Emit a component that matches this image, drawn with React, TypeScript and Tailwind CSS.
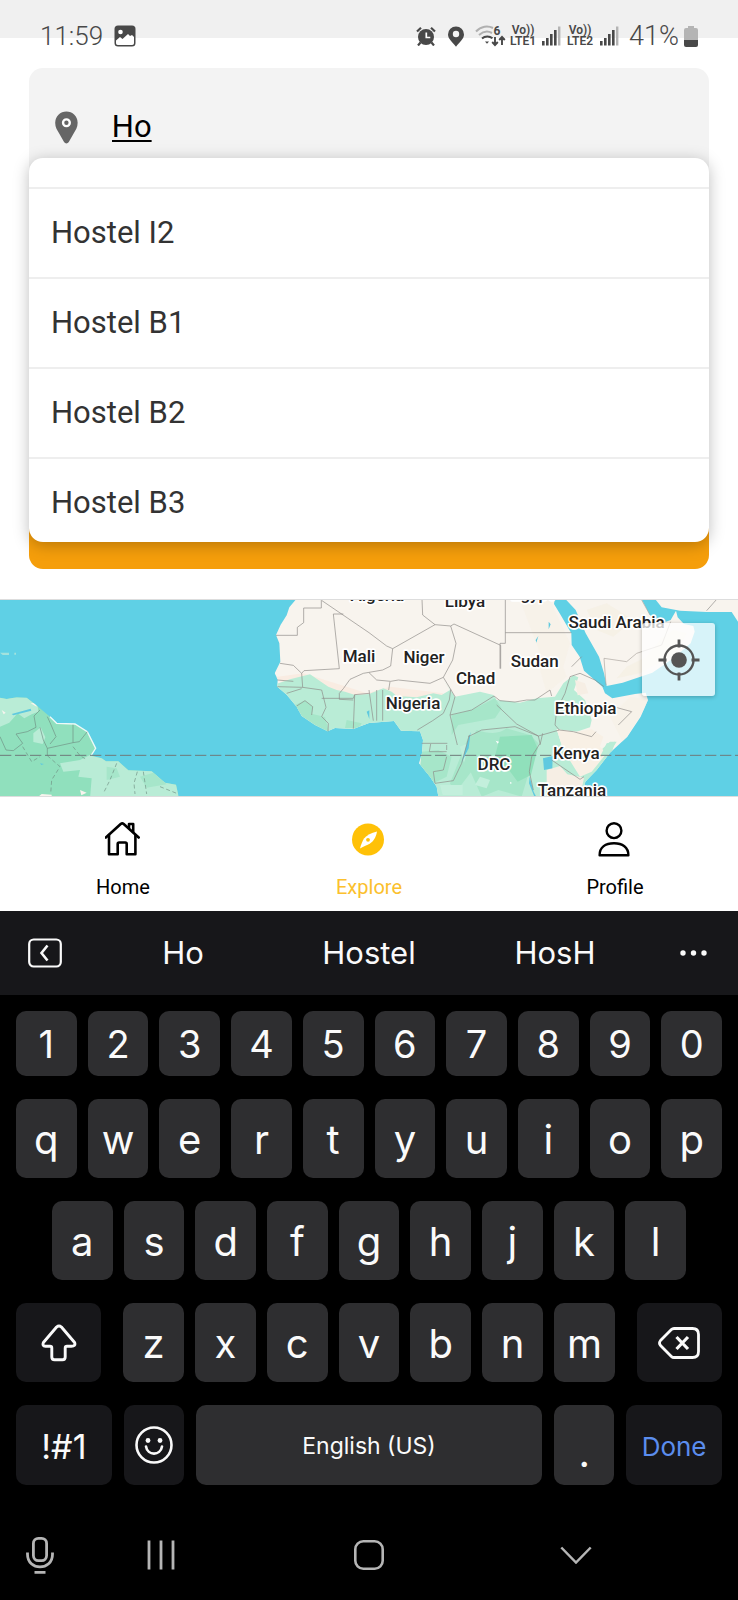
import { useState, type ReactNode } from "react";

const SUGGESTIONS = ["Hostel I2", "Hostel B1", "Hostel B2", "Hostel B3"];

function SignalBars() {
  return (
    <svg viewBox="0 0 19 20" className="h-5 w-[19px]" aria-hidden="true">
      <g fill="#484848">
        <rect x="0" y="15" width="2.6" height="4.5" />
        <rect x="4" y="12" width="2.6" height="7.5" />
        <rect x="8" y="8" width="2.6" height="11.5" />
        <rect x="12" y="4" width="2.6" height="15.5" />
      </g>
      <rect x="16" y="0.5" width="2.4" height="19" fill="#b4b4b4" />
    </svg>
  );
}

function Volte({ line }: { line: string }) {
  return (
    <span className="flex w-7 flex-col items-center text-[12px] leading-[11px] font-semibold">
      <span>Vo))</span>
      <span>{line}</span>
    </span>
  );
}

function StatusBar() {
  return (
    <header className="flex h-[68px] items-start justify-between bg-[linear-gradient(to_bottom,#f0f0f0_38px,#ffffff_38px)] pt-[21px] pr-10 pl-10 text-[#484848]">
      <div className="flex h-[30px] items-center gap-[11px]">
        <time className="text-[26px] leading-[30px] font-light">11:59</time>
        <svg viewBox="0 0 22 22" className="size-[22px]" aria-hidden="true">
          <rect x="0.5" y="0.5" width="21" height="21" rx="3.5" fill="#484848" />
          <circle cx="6.5" cy="7" r="2.3" fill="#fff" />
          <path d="M2 15.500 6 12l2.500 2L14 9l2 2 2-1 2 2v6.200a1.800 1.800 0 0 1-1.800 1.800H3.800A1.800 1.800 0 0 1 2 18.200z" fill="#fff" />
        </svg>
      </div>
      <div className="flex h-[30px] items-center">
        <svg viewBox="0 0 20 20" className="mr-3 size-5" aria-hidden="true">
          <circle cx="10" cy="11" r="8" fill="#484848" />
          <path d="M1 5.500 5 1.800M19 5.500 15 1.800M4.500 16.500 2 19.500M15.500 16.500 18 19.500" stroke="#484848" strokeWidth="2.200" />
          <path d="M10.300 6.500v5h4" fill="none" stroke="#fff" strokeWidth="1.700" />
        </svg>
        <svg viewBox="0 0 16 21" className="mr-[11px] h-[21px] w-4" aria-hidden="true">
          <path d="M8 .5a8 8 0 0 0-8 8C0 13 4.500 16 8 20.800 11.500 16 16 13 16 8.500a8 8 0 0 0-8-8z" fill="#484848" />
          <circle cx="8" cy="8" r="3.200" fill="#f4f4f4" />
        </svg>
        <svg viewBox="0 0 31 22" className="mr-[3px] h-[22px] w-[31px]" aria-hidden="true">
          <path d="M1 6.500C6 1 13 .5 18 3" fill="none" stroke="#b0b0b0" strokeWidth="2" />
          <path d="M4 10C8 6.500 13 5.800 17 8" fill="none" stroke="#b0b0b0" strokeWidth="2" />
          <path d="M7 13.500c3-2.700 7.500-2.700 10.500-.2" fill="none" stroke="#484848" strokeWidth="2" />
          <path d="M10 16.500h4l-2 2.200z" fill="#484848" />
          <text x="18.500" y="10" fontSize="12" fontWeight="700" fill="#484848">6</text>
          <path d="M20 12v8M17.200 17l2.800 3 2.800-3M27 20v-8M24.200 15l2.800-3 2.800 3" fill="none" stroke="#484848" strokeWidth="1.900" />
        </svg>
        <Volte line="LTE1" />
        <span className="mr-[5px] ml-[5px]"><SignalBars /></span>
        <Volte line="LTE2" />
        <span className="mr-[10px] ml-[6px]"><SignalBars /></span>
        <span className="text-[27px] leading-[30px] font-light">41%</span>
        <svg viewBox="0 0 14 21" className="ml-[5px] h-[21px] w-[14px]" aria-hidden="true">
          <path d="M4 0h6v2H12a2 2 0 0 1 2 2v11H0V4a2 2 0 0 1 2-2h2z" fill="#b4b4b4" />
          <path d="M0 14h14v5a2 2 0 0 1-2 2H2a2 2 0 0 1-2-2z" fill="#484848" />
        </svg>
      </div>
    </header>
  );
}

function SearchPanel() {
  const [query, setQuery] = useState("Ho");
  return (
    <section className="relative mx-[29px] mb-[30px]">
      <div className="rounded-[14px] bg-[#f3f3f3] pb-[180px]">
        <label className="flex h-[118px] items-center pl-[26px]">
          <svg viewBox="0 0 25 35" className="h-[35px] w-[25px]" aria-hidden="true">
            <path d="M12.500 0A12.300 12.300 0 0 0 .2 12.300c0 5 2.300 8.300 4.400 11.700l5.300 9.500c1.300 2 3.900 2 5.200 0l5.300-9.500c2.100-3.400 4.400-6.700 4.400-11.700A12.300 12.300 0 0 0 12.500 0z" fill="#666" />
            <circle cx="12.500" cy="12.300" r="3.700" fill="none" stroke="#fff" strokeWidth="2.600" />
          </svg>
          <input
            type="text"
            aria-label="Location"
            value={query}
            onChange={(e) => setQuery(e.target.value)}
            className="ml-[34px] w-full min-w-0 bg-transparent text-[31px] leading-[36px] text-black underline decoration-2 underline-offset-[3px] outline-none"
          />
        </label>
      </div>
      <button type="button" aria-label="Get directions" className="mt-[123px] block h-20 w-full rounded-[14px] bg-[#f59e0b]" />
      <ul className="absolute inset-x-0 top-[90px] h-[384px] overflow-hidden rounded-[14px] bg-white shadow-[0_3px_16px_rgba(0,0,0,0.26)]">
        <li className="h-[29px]" />
        {SUGGESTIONS.map((name) => (
          <li key={name} className="border-t-2 border-[#eeeeee]">
            <button
              type="button"
              onClick={() => setQuery(name)}
              className="block h-[88px] w-full px-[22px] text-left text-[31px] leading-[86px] text-[#333333]"
            >
              {name}
            </button>
          </li>
        ))}
      </ul>
    </section>
  );
}

const COUNTRIES: [string, number, number][] = [
  ["Algeria", 1132, 34],
  ["Libya", 1395, 51],
  ["Egypt", 1597, 31],
  ["Saudi Arabia", 1850, 113],
  ["Mali", 1077, 216],
  ["Niger", 1272, 219],
  ["Chad", 1427, 281],
  ["Sudan", 1604, 231],
  ["Nigeria", 1239, 357],
  ["Ethiopia", 1757, 371],
  ["Kenya", 1729, 506],
  ["DRC", 1482, 539],
  ["Tanzania", 1716, 617],
];

function WorldMap() {
  return (
    <section className="relative border-t border-b border-[#dddddd]">
      <svg
        viewBox="0 30 2214 588"
        preserveAspectRatio="xMidYMid slice"
        className="block aspect-[738/196] w-full bg-[#5fd0e5]"
        role="img"
        aria-label="World map"
      >
        <defs>
          <clipPath id="africa">
            <path d="M888 28 868 52 860 76 842 104 828 135 838 160 841 215 824 250 833 268 832 290 860 314 890 350 905 378 945 405 983 424 1005 414 1060 417 1107 399 1182 393 1203 422 1260 424 1269 450 1266 490 1257 520 1290 560 1310 590 1315 620 1745 620 1756 575 1790 540 1830 488 1882 440 1922 380 1944 330 1937 308 1905 312 1837 325 1815 310 1807 290 1752 242 1739 200 1715 165 1714 130 1682 75 1662 42 1664 28z" />
          </clipPath>
          <clipPath id="america">
            <path d="M0 323 20 327 50 322 80 323 108 345 150 380 170 400 225 402 262 425 287 475 273 497 305 505 318 514 355 514 385 541 455 544 495 578 528 584 536 620H0z" />
          </clipPath>
        </defs>

        <path d="M0 188h27v7H8zM43 188h5v6h-5z" fill="#a3e2dd" />

        <g clipPath="url(#africa)">
          <rect x="800" y="28" width="1180" height="600" fill="#f8f4ee" />
          <path d="M1560 30h90l60 130-20 70-70-40zM1830 380l60-60 60 10-80 130zM1620 240l60-40 20 60-60 50z" fill="#f6f0e6" opacity=".6" />
          <path d="M820 262l90-12 130 40 60 20 70-20 160 20-10 30-380-20z" fill="#f9ece2" />
          <path d="M820 285 870 268 930 253 985 290 1010 300 1035 305 1065 315 1107 312 1150 295 1175 305 1190 318 1250 322 1300 310 1325 315 1350 300 1330 270 1365 320 1440 305 1480 315 1490 330 1560 338 1610 325 1665 320 1690 280 1720 256 1735 262 1722 300 1755 330 1775 390 1770 412 1730 425 1670 418 1685 465 1710 500 1750 530 1830 455 1850 455 1760 600 1740 625H1300L1240 440 1110 402 985 430 820 310z" fill="#b9ecd6" />
          <path d="M885 345l30-14 25 20-5 20 40 10 12 45-50-20-32-26zM1355 375l60-15 70-35 20 30-20 30-110 20-20 30zM1040 390l45 10-10 18-40-4zM1430 420q60 20 90-5l70 20 25 25-20 60-30 100-70-20-50 20-40-90-20-40zM1265 485l50-5 40 20-15 60-40 20-40-50zM1405 440l40-10-20 100-60 80-15-30z" fill="#a6e6c9" />
          <path d="M1500 440l95-5 18 40-20 80-40 20-30-40-50 10z" fill="#90e0bb" />
          <path d="M1670 418 1730 425 1775 418 1810 440 1800 470 1820 490 1775 545 1740 560 1690 480z" fill="#f8f0e5" />
          <path d="M1640 540l40-12 22 25 50 10-12 60h-70l-30-45zM1725 270l30 10 10 30-32 6z" fill="#f6eee4" />
          <path d="M1735 480l22 6-6 35zM1800 500l20-40 25-5-10 35z" fill="#b9ecd6" />
          <path d="M1320 585h68v30h-60zM1440 560l30 10-10 25-35-10zM1380 470l28-12-16 60z" fill="#c3efdc" />
          <path d="M1629 505 1658 498 1657 535 1632 540zM1589 560l12 45 10 20h-6l-18-45zM1646 95l6 8-6 15zM1607 150l8-12-6 20zM1412 425l-6 50-22 45 14-50zM1100 365l8-4v26z" fill="#5fc9df" />
          <path d="M1487 452l10 3-4 6zM1530 575l6 4-5 3z" fill="#fff" />
        </g>

        <g fill="none" stroke="#8d8986" strokeWidth="2" strokeLinejoin="round">
          <path d="M964 28v26H911V98L892 112V136H828M966 32 1107 128 1160 168 1178 176 1305 104 1268 75 1266 28M1000 72H1030M1000 72 1018 236 912 242 905 250 880 226 840 220M1178 176 1172 228 1148 240 1090 250 1050 268 1030 296 1018 310 1018 328M1305 104 1352 108 1362 102 1502 166V236M1516 30V160H1500V236M1516 128H1714M1352 108 1368 160 1358 210 1330 262 1352 298M1107 248 1130 270 1172 274 1195 270 1290 280 1330 262M1352 298 1348 330 1330 370 1298 392 1252 420M1166 300 1170 275" />
          <path d="M832 270 880 274M832 290 908 292 905 250M908 292 965 300 978 352 965 380 985 400 984 424M890 348 915 332 938 350 935 375M965 325H1060L1064 314 1060 416M860 310 905 296M1018 328 1060 330M1107 300 1120 392M1130 300 1130 392M1148 300V392M1064 314 1107 310" />
          <path d="M1352 298 1365 320 1350 375 1372 465M1350 375 1415 360 1482 318 1500 332 1545 336 1580 330 1605 330 1650 300 1655 318M1490 345 1550 402 1615 438 1678 420 1720 425 1775 440 1788 425M1405 440 1445 420 1545 410 1615 438 1620 460 1595 500 1588 545 1600 600M1265 460H1342M1340 465V480M1292 462 1288 485 1340 485M1340 500 1330 540 1300 545 1305 580 1360 572 1385 520 1408 435M1628 430 1620 465M1655 510 1740 568 1752 560M1710 260 1740 250 1785 270 1812 290M1710 260 1695 310 1670 360 1665 405 1678 420M1715 230 1745 200M1840 350 1895 365 1855 405" />
        </g>

        <path d="M1697 28 1727 60 1757 130 1797 200 1812 250 1820 288 1868 278 1957 248 2020 205 2072 160 2084 125 2080 108 2052 102 2033 82 2028 62 2012 90 1990 98 1950 76 1925 28z" fill="#f8f4ee" />
        <path d="M1760 60l60-20 80 50-60 50-50-20zM1880 230l60-30 40-50 40-30 40 10-30 60-110 60-70 15z" fill="#f5efe3" opacity=".7" />
        <path d="M1812 205 1880 215 1910 190 1985 165 2012 95M1812 205 1818 285M1925 30 1950 75" fill="none" stroke="#aaa59f" strokeWidth="2" />
        <path d="M1966 28 1985 52 2040 62 2120 66 2195 66 2214 95V28z" fill="#f8f4ee" />
        <path d="M2120 62 2150 28" stroke="#8d8986" strokeWidth="2" />

        <g clipPath="url(#america)">
          <rect y="300" width="560" height="320" fill="#90e0bd" />
          <path d="M0 315h110l5 50-20 8-22 12-20-15-25 28L0 410zM100 430l22-18 14 30-8 20-28-6zM180 520l60-10 30-15 60 10 240 60v60H270l5-60-40-5 5-20-50 5z" fill="#b9ecd6" />
          <path d="M35 372 92 356 94 362 40 376zM120 520l12 2-8 3z" fill="#5fc9df" />
          <path d="M5 360l12 8-6 5zM125 612l30 2v6h-40zM240 600l20 8-16 8zM92 340l16-2 2 12z" fill="#f8f4ee" />
          <path d="M320 530l30 5 10 25-40 10zM420 560l40-12 40 35-60 10z" fill="#a6e6ca" />
        </g>
        <path d="M150 380 170 400 225 402 262 425 287 475 273 497" fill="none" stroke="#eefaf8" strokeWidth="4" />
        <g fill="none" stroke="#6f8f84" strokeWidth="2">
          <path d="M120 360 102 378 108 412 82 425 48 432 68 460 40 482 18 480 0 440M120 412 130 450 142 475V497M142 380 152 402 168 440 150 462M219 404V458L142 475M262 425 238 455 219 458" />
          <path strokeDasharray="12 8" d="M68 470 95 515 120 500M142 497 180 530 155 570 152 612M219 470 240 497 262 510M350 520 330 570 310 610M412 545 402 580 405 612M430 545 440 612M480 590 530 610" />
        </g>

        <path d="M0 496H2214" stroke="#6f7a7a" strokeWidth="3" strokeDasharray="34 11" />

        <g
          fontSize="51"
          fontWeight="500"
          textAnchor="middle"
          fill="#222222"
          stroke="#ffffff"
          strokeWidth="10"
          strokeLinejoin="round"
          paintOrder="stroke"
        >
          {COUNTRIES.map(([name, x, y]) => (
            <text key={name} x={x} y={y}>{name}</text>
          ))}
        </g>
      </svg>
      <button
        type="button"
        aria-label="My location"
        className="absolute top-[23px] right-[23px] flex size-[73px] items-center justify-center rounded-[3px] bg-white/75 shadow-[0_1px_4px_rgba(0,0,0,0.25)]"
      >
        <svg viewBox="0 0 42 42" className="size-[42px]" aria-hidden="true">
          <circle cx="21" cy="21" r="14.500" fill="none" stroke="#555" strokeWidth="2.400" />
          <circle cx="21" cy="21" r="7.800" fill="#555" />
          <path d="M21 .5v8M21 33.500v8M.5 21h8M33.500 21h8" stroke="#555" strokeWidth="2.800" />
        </svg>
      </button>
    </section>
  );
}

function Tab({ label, active, children }: { label: string; active?: boolean; children: ReactNode }) {
  return (
    <a
      href="#"
      aria-current={active ? "page" : undefined}
      className={`flex flex-1 flex-col items-center gap-[18px] text-[20px] leading-6 ${active ? "text-[#fbc02d]" : "text-black"}`}
    >
      <svg viewBox="0 0 36 36" className="size-9" aria-hidden="true">{children}</svg>
      {label}
    </a>
  );
}

function TabBar() {
  return (
    <nav className="flex bg-white pt-[24px] pb-[12px]">
      <Tab label="Home">
        <g fill="none" stroke="currentColor" strokeWidth="2.600" strokeLinecap="round" strokeLinejoin="round">
          <path d="M.8 16.500 15.700 3Q17.200 1.800 18.700 3L33.700 16.500" />
          <path d="M4 14v19.300h8.700V23q0-1.500 1.500-1.500h6q1.500 0 1.500 1.500v10.300h8.700V14" />
          <path d="M24 7V3h4.200v8" />
        </g>
      </Tab>
      <Tab label="Explore" active>
        <circle cx="17" cy="18.500" r="16" fill="#ffc107" />
        <path d="M26 10.500c-1 6-3.500 9.500-7 12-3 1.500-6 3-10 5 1-4 2.500-7.500 4-10 3-3.500 7-5.500 13-7z" fill="#fff" />
        <circle cx="17" cy="18.800" r="1.900" fill="#ffc107" />
      </Tab>
      <Tab label="Profile">
        <g fill="none" stroke="currentColor" strokeWidth="2.400" strokeLinejoin="round">
          <circle cx="17" cy="9.700" r="7.400" />
          <path d="M2.600 34.300c0-8 6-12 14.400-12s14.400 4 14.400 12z" />
        </g>
      </Tab>
    </nav>
  );
}

function Key({ children, className, label }: { children: ReactNode; className: string; label?: string }) {
  return (
    <button type="button" aria-label={label} className={`flex items-center justify-center rounded-[10px] ${className}`}>
      {children}
    </button>
  );
}

function LetterKeys({ letters }: { letters: string }) {
  return (
    <>
      {letters.split("").map((c) => (
        <Key key={c} className="h-[79px] min-w-0 flex-1 bg-[#2e2e30] pt-[2px] text-[40px]">{c}</Key>
      ))}
    </>
  );
}

function Keyboard() {
  return (
    <section className="bg-black font-[Inter,sans-serif] text-[#fafafa]">
      <div className="grid h-[84px] grid-cols-[90px_1fr_1fr_1fr_90px] bg-[#17171a] text-[31px]">
        <button type="button" aria-label="Collapse" className="flex items-center justify-center">
          <svg viewBox="0 0 34 30" className="h-[30px] w-[34px]" fill="none" stroke="currentColor" strokeWidth="2.200" aria-hidden="true">
            <rect x="1.200" y="1.500" width="31.600" height="27" rx="4.500" />
            <path d="M19.500 7.500 13.500 15l6 7.500" strokeWidth="2.600" />
          </svg>
        </button>
        <button type="button">Ho</button>
        <button type="button">Hostel</button>
        <button type="button">HosH</button>
        <button type="button" aria-label="More" className="flex items-center justify-center">
          <svg viewBox="0 0 28 6" className="h-[6px] w-7" fill="currentColor" aria-hidden="true">
            <circle cx="4" cy="3" r="2.700" />
            <circle cx="14.500" cy="3" r="2.700" />
            <circle cx="25" cy="3" r="2.700" />
          </svg>
        </button>
      </div>

      <div className="flex flex-col gap-[23px] px-4 pt-4">
        <div className="flex gap-[11px]">
          {"1234567890".split("").map((d) => (
            <Key key={d} className="h-[65px] min-w-0 flex-1 bg-[#2e2e30] pt-[2px] text-[38px]">{d}</Key>
          ))}
        </div>
        <div className="flex gap-[11px]">
          <LetterKeys letters="qwertyuiop" />
        </div>
        <div className="flex gap-[11px] px-9">
          <LetterKeys letters="asdfghjkl" />
        </div>
        <div className="flex gap-[11px]">
          <Key label="Shift" className="mr-[11px] h-[79px] flex-[1.4] bg-[#17171a]">
            <svg viewBox="0 0 36 38" className="h-[38px] w-9" fill="none" stroke="currentColor" strokeWidth="2.900" strokeLinejoin="round" aria-hidden="true">
              <path d="M15.600 3 2.400 18.500Q1 22 4.500 22.300H9q1.800 0 1.800 1.800V33q0 2.800 2.800 2.800h7.800q2.800 0 2.800-2.800v-8.900q0-1.800 1.800-1.800h4.300Q35 22 33.600 18.500L20.400 3Q18 1 15.600 3z" />
            </svg>
          </Key>
          <LetterKeys letters="zxcvbnm" />
          <Key label="Backspace" className="ml-[11px] h-[79px] flex-[1.4] bg-[#17171a]">
            <svg viewBox="0 0 42 32" className="h-8 w-[42px]" fill="none" stroke="currentColor" strokeWidth="2.800" strokeLinejoin="round" aria-hidden="true">
              <path d="M16 1.500h18.500q6 0 6 6v17q0 6-6 6H16q-1.500 0-2.600-1.100L2.500 18.500Q.5 16 2.500 13.500L13.400 2.600Q14.500 1.500 16 1.500z" />
              <path d="m18.500 10 11.500 12M30 10 18.500 22" strokeWidth="3.200" />
            </svg>
          </Key>
        </div>
        <div className="grid grid-cols-[96fr_60fr_347fr_60fr_96fr] gap-3">
          <Key className="h-20 bg-[#17171a] pt-[2px] text-[34px]">!#1</Key>
          <Key label="Emoji" className="h-20 bg-[#17171a]">
            <svg viewBox="0 0 38 38" className="size-[38px]" fill="none" stroke="currentColor" strokeWidth="2.600" aria-hidden="true">
              <circle cx="19" cy="19" r="17.500" />
              <path d="M11 20.500c1.500 9.500 14.500 9.500 16 0" strokeLinecap="round" />
              <circle cx="13" cy="14.500" r="2.400" fill="currentColor" stroke="none" />
              <circle cx="25" cy="14.500" r="2.400" fill="currentColor" stroke="none" />
            </svg>
          </Key>
          <Key className="h-20 bg-[#2e2e30] pt-[2px] text-[23px]">English (US)</Key>
          <Key className="h-20 bg-[#2e2e30] pt-4 text-[40px]">.</Key>
          <Key className="h-20 bg-[#17171a] pt-[2px] text-[26px] text-[#5b8dee]">Done</Key>
        </div>
      </div>

      <div className="mt-[25px] flex h-[90px] items-center pr-[58px] pl-[23px] text-[#b5b5b5]">
        <button type="button" aria-label="Voice input" className="flex w-[34px] justify-center">
          <svg viewBox="0 0 28 37" className="h-[37px] w-7" fill="none" stroke="currentColor" strokeWidth="2.800" aria-hidden="true">
            <rect x="7.400" y="1.400" width="13.200" height="22.200" rx="5" />
            <path d="M1.500 15.500v1.700c0 17 25 17 25 0v-1.700M8.500 35.400h11" />
          </svg>
        </button>
        <button type="button" aria-label="Recent apps" className="flex flex-1 justify-center">
          <svg viewBox="0 0 28 30" className="h-[30px] w-7" stroke="currentColor" strokeWidth="2.800" aria-hidden="true">
            <path d="M2 .5v29M14 .5v29M26 .5v29" />
          </svg>
        </button>
        <button type="button" aria-label="Home screen" className="flex flex-1 justify-center">
          <svg viewBox="0 0 30 30" className="size-[30px]" fill="none" stroke="currentColor" strokeWidth="2.600" aria-hidden="true">
            <rect x="1.300" y="1.300" width="27.400" height="27.400" rx="8" />
          </svg>
        </button>
        <button type="button" aria-label="Hide keyboard" className="flex flex-1 justify-center">
          <svg viewBox="0 0 32 18" className="h-[18px] w-8" fill="none" stroke="currentColor" strokeWidth="2.500" aria-hidden="true">
            <path d="m1.300 1.500 14.700 15 14.700-15" />
          </svg>
        </button>
      </div>
    </section>
  );
}

export default function App() {
  return (
    <main className="min-h-screen bg-white font-[Roboto,sans-serif]">
      <StatusBar />
      <SearchPanel />
      <WorldMap />
      <TabBar />
      <Keyboard />
    </main>
  );
}
